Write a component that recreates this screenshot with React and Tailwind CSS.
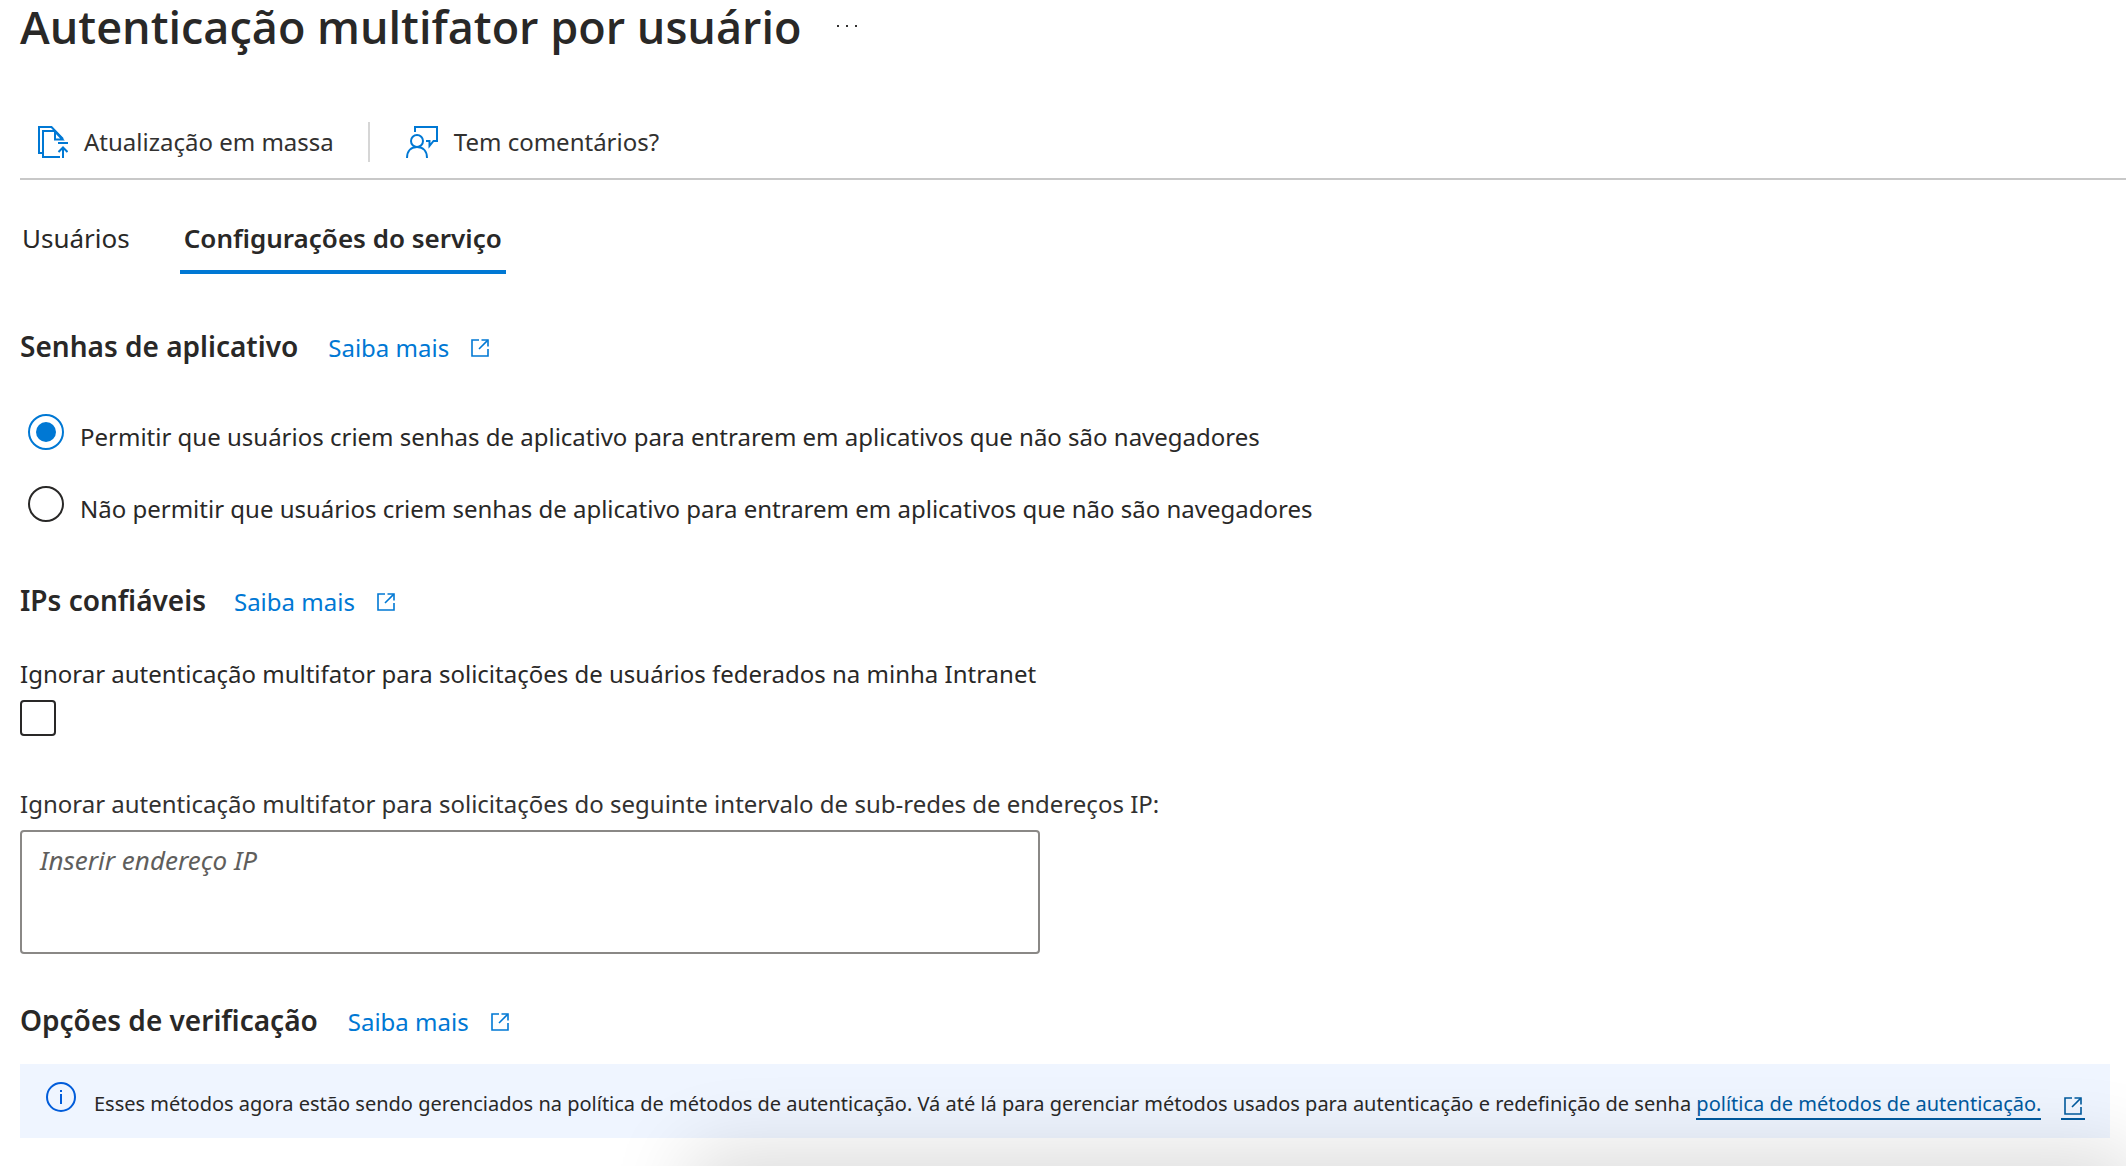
import React, { useState } from "react";
import { clsx } from "clsx";

function ExternalLinkIcon({ className }) {
  return (
    <svg viewBox="0 0 18 18" fill="none" stroke="currentColor" strokeWidth="1.6" className={clsx("size-[18px] shrink-0", className)} aria-hidden="true">
      <path d="M8 1H1V17H17V10" />
      <path d="M10.5 1H17V7.5" />
      <path d="M16.6 1.4L8 10" />
    </svg>
  );
}

function BulkUpdateIcon() {
  return (
    <svg viewBox="0 0 30 32" fill="none" stroke="currentColor" strokeWidth="2" className="h-8 w-[30px] shrink-0" aria-hidden="true">
      <path d="M4 27H1V1H13.5L25 13" />
      <path d="M22 31H5V5H16.5L24.5 13.5H17V5" />
      <path d="M20 17H30" />
      <path d="M25 32V21.5" />
      <path d="M20.5 26L25 21.5L29.5 26" />
    </svg>
  );
}

function FeedbackIcon() {
  return (
    <svg viewBox="0 0 32 32" fill="none" stroke="currentColor" strokeWidth="2" className="size-8 shrink-0" aria-hidden="true">
      <path d="M9 6V1H31V15H27.5L23.5 20V15H20" />
      <circle cx="11" cy="15" r="6" />
      <path d="M1 32C1 25 5 21 11 21S21 25 21 32" />
    </svg>
  );
}

function InfoIcon() {
  return (
    <svg viewBox="0 0 30 30" className="size-[30px] shrink-0 text-[#015cda]" aria-hidden="true">
      <circle cx="15" cy="15" r="14" fill="none" stroke="currentColor" strokeWidth="2" />
      <path d="M14 12H16V22H14ZM14 8H16V10H14Z" fill="currentColor" />
    </svg>
  );
}

function SectionHeading({ title, gap }) {
  return (
    <div className={clsx("flex items-baseline", gap)}>
      <h2 className="text-[28px] leading-9 font-semibold">{title}</h2>
      <a href="#" className="flex items-center gap-[22px] text-[24px] leading-9 text-[#0078d4]">
        Saiba mais
        <ExternalLinkIcon />
      </a>
    </div>
  );
}

const TABS = ["Usuários", "Configurações do serviço"];

const PASSWORD_OPTIONS = [
  {
    id: "allow",
    label: "Permitir que usuários criem senhas de aplicativo para entrarem em aplicativos que não são navegadores",
  },
  {
    id: "deny",
    label: "Não permitir que usuários criem senhas de aplicativo para entrarem em aplicativos que não são navegadores",
  },
];

export default function App() {
  const [tab, setTab] = useState(TABS[1]);
  const [appPasswords, setAppPasswords] = useState("allow");

  return (
    <main className="relative min-h-screen overflow-hidden bg-white pl-5 font-['Noto_Sans','Segoe_UI',sans-serif] text-[24px] leading-8 text-[#292827]">
      {/* Title */}
      <header className="flex items-start gap-9">
        <h1 className="font-['Open_Sans','Segoe_UI',sans-serif] text-[45px] leading-[54px] font-semibold">
          Autenticação multifator por usuário
        </h1>
        <button type="button" aria-label="Mais opções" className="flex h-[52px] items-center gap-[7px] text-[#323130]">
          <span className="size-[2px] bg-current" />
          <span className="size-[2px] bg-current" />
          <span className="size-[2px] bg-current" />
        </button>
      </header>

      {/* Command bar */}
      <div className="mt-[68px] flex h-[58px] items-start border-b-2 border-[#c8c8c8] pl-[18px] text-[#323130]">
        <button type="button" className="flex h-10 items-center gap-4">
          <span className="text-[#0078d4]"><BulkUpdateIcon /></span>
          Atualização em massa
        </button>
        <span className="mr-9 ml-[34px] h-10 w-[2px] bg-[#d6d6d6]" />
        <button type="button" className="flex h-10 items-center gap-4">
          <span className="text-[#0078d4]"><FeedbackIcon /></span>
          Tem comentários?
        </button>
      </div>

      {/* Tabs */}
      <div role="tablist" className="mt-10 -ml-0.5 flex gap-[46px]">
        {TABS.map((name) => (
          <button
            key={name}
            type="button"
            role="tab"
            aria-selected={tab === name}
            onClick={() => setTab(name)}
            className={clsx(
              "h-[54px] border-b-4 px-1 pb-4 text-[26px] leading-9",
              tab === name ? "border-[#0078d4] font-semibold" : "border-transparent"
            )}
          >
            {name}
          </button>
        ))}
      </div>

      {/* App passwords */}
      <section className="mt-[54px]">
        <SectionHeading title="Senhas de aplicativo" gap="gap-[30px]" />
        <div role="radiogroup" aria-label="Senhas de aplicativo" className="mt-12 flex flex-col gap-9 pl-2">
          {PASSWORD_OPTIONS.map(({ id, label }) => (
            <label key={id} className="flex h-9 items-start gap-4">
              <input
                type="radio"
                name="app-passwords"
                checked={appPasswords === id}
                onChange={() => setAppPasswords(id)}
                className="grid size-9 shrink-0 appearance-none place-content-center rounded-full border-2 border-[#292827] before:size-5 before:rounded-full checked:border-[#0078d4] checked:before:bg-[#0078d4]"
              />
              <span className="pt-[7px]">{label}</span>
            </label>
          ))}
        </div>
      </section>

      {/* Trusted IPs */}
      <section className="mt-[60px]">
        <SectionHeading title="IPs confiáveis" gap="gap-7" />
        <div className="mt-[38px] flex flex-col items-start gap-[10px]">
          <label htmlFor="skip-federated">
            Ignorar autenticação multifator para solicitações de usuários federados na minha Intranet
          </label>
          <input
            id="skip-federated"
            type="checkbox"
            className="size-9 appearance-none rounded-[4px] border-2 border-[#292827] checked:bg-[#0078d4]"
          />
        </div>
        <div className="mt-[52px] flex flex-col gap-[10px]">
          <label htmlFor="ip-ranges" className="text-[#323130]">
            Ignorar autenticação multifator para solicitações do seguinte intervalo de sub-redes de endereços IP:
          </label>
          <textarea
            id="ip-ranges"
            placeholder="Inserir endereço IP"
            className="h-[124px] w-[1020px] max-w-full resize-none rounded-[4px] border-2 border-[#8a8886] px-[18px] py-3 text-[26px] leading-8 placeholder:text-[#605e5c] placeholder:italic"
          />
        </div>
      </section>

      {/* Verification options */}
      <section className="mt-12">
        <SectionHeading title="Opções de verificação" gap="gap-[30px]" />
        <div className="mt-6 mr-4 flex h-[74px] items-start gap-[18px] bg-[#eff5ff] pt-[18px] pl-[26px] text-[20px]">
          <InfoIcon />
          <p className="flex items-end pt-2 leading-7 whitespace-nowrap">
            <span className="border-b-2 border-transparent">
              Esses métodos agora estão sendo gerenciados na política de métodos de autenticação. Vá até lá para gerenciar métodos usados para autenticação e redefinição de senha&nbsp;
            </span>
            <a href="#" className="flex items-end gap-5 text-[#005a9e]">
              <span className="border-b-2 border-[#005a9e]">política de métodos de autenticação.</span>
              <span className="border-b-2 border-[#005a9e] px-[3px] pb-[3px]"><ExternalLinkIcon /></span>
            </a>
          </p>
        </div>
      </section>

      {/* Shadow of the panel docked under the page */}
      <div className="pointer-events-none absolute right-5 -bottom-14 left-[720px] h-10 shadow-[0_0_80px_30px_rgba(0,0,0,0.15)]" />
    </main>
  );
}
